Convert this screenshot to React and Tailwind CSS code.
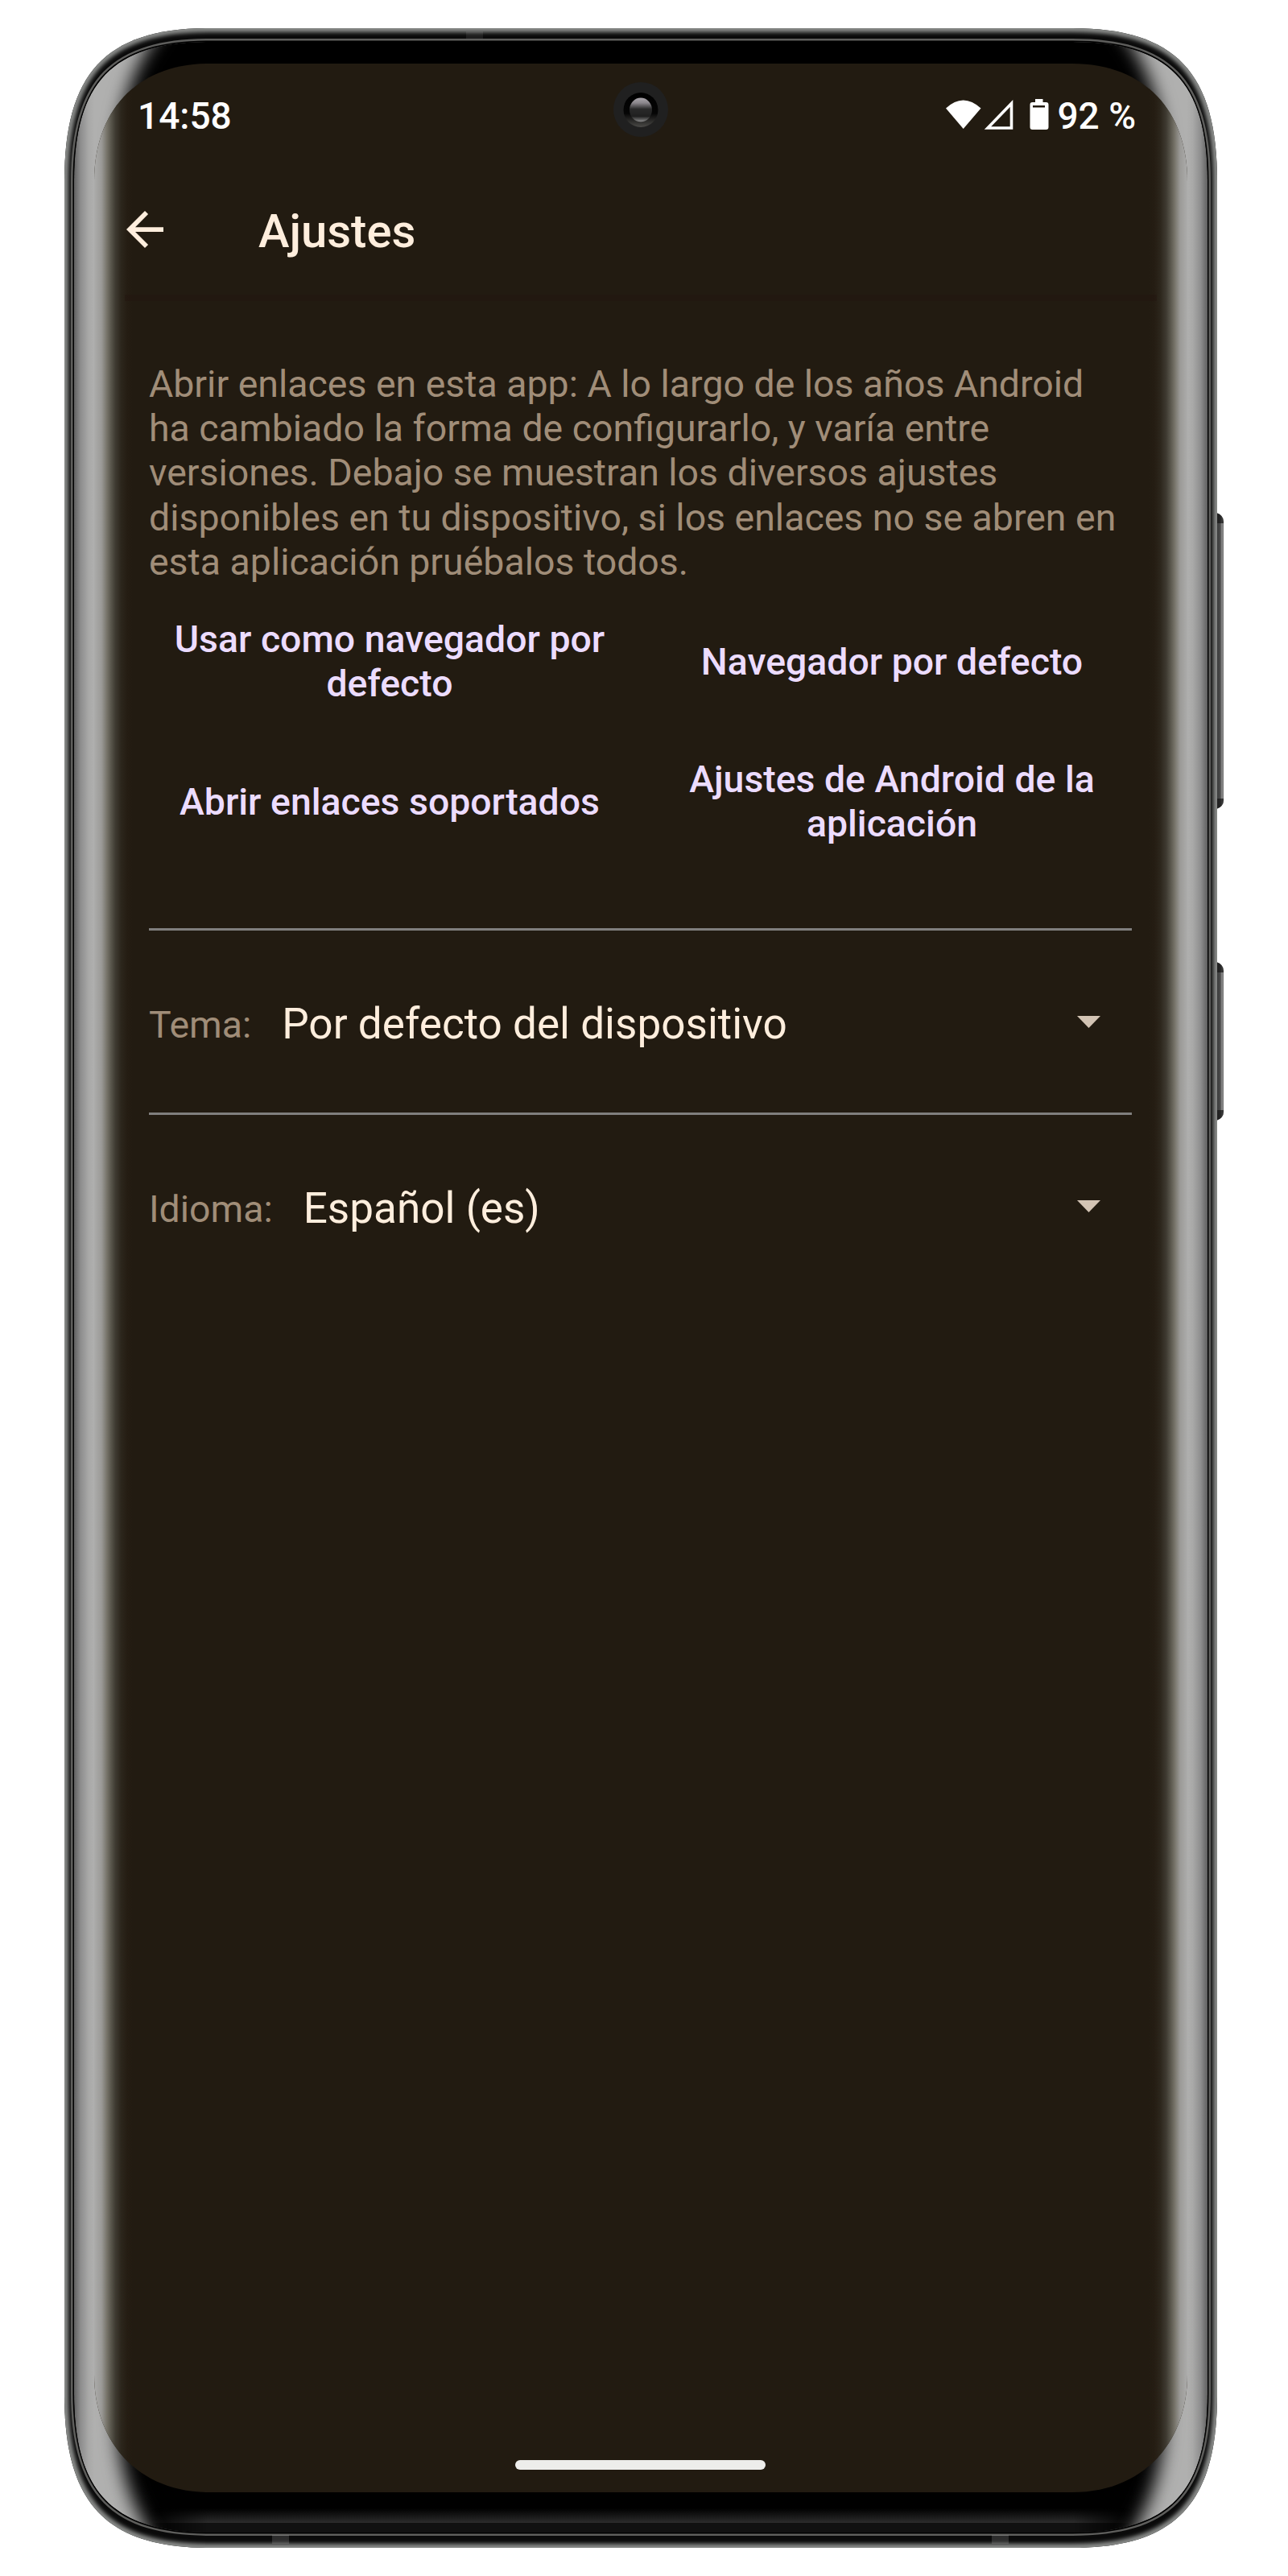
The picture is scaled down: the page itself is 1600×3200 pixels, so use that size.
const BODY = "M260 35H1332C1460 35 1512 90 1512 225V2975C1512 3110 1460 3165 1332 3165H260C132 3165 80 3110 80 2975V225C80 90 132 35 260 35Z";
const GLASS = "M260 52H1332C1450 52 1500 100 1500 225V2973C1500 3098 1450 3146 1332 3146H260C142 3146 92 3098 92 2973V225C92 100 142 52 260 52Z";
const SCREEN = "M260 79H1332C1422 79 1475 138 1475 225V2950C1475 3032 1422 3096 1332 3096H260C170 3096 117 3032 117 2950V225C117 138 170 79 260 79Z";
const SHADE = "M215 20H1377C1418 60 1447 130 1447 200V2990C1447 3070 1428 3120 1385 3180H207C164 3120 145 3070 145 2990V200C145 130 174 60 215 20Z";

function PhoneBody() {
  return (
    <svg className="absolute inset-0" width="1600" height="3200" viewBox="0 0 1600 3200" fill="none" aria-hidden="true">
      <defs>
        <linearGradient id="key" x1="1512" x2="1520" y1="0" y2="0" gradientUnits="userSpaceOnUse">
          <stop offset="0" stopColor="#3a3b3b" />
          <stop offset="0.5" stopColor="#4c4c4c" />
          <stop offset="0.75" stopColor="#909090" />
          <stop offset="1" stopColor="#6a6a6a" />
        </linearGradient>
        <linearGradient id="edge" x1="92" x2="1500" y1="0" y2="0" gradientUnits="userSpaceOnUse">
          <stop offset="0" stopColor="#606060" />
          <stop offset="0.006" stopColor="#8e8e8e" />
          <stop offset="0.013" stopColor="#a9a9a8" />
          <stop offset="0.018" stopColor="#b0b0af" />
          <stop offset="0.982" stopColor="#b0b0af" />
          <stop offset="0.987" stopColor="#a9a9a8" />
          <stop offset="0.994" stopColor="#8e8e8e" />
          <stop offset="1" stopColor="#606060" />
        </linearGradient>
        <linearGradient id="left" x1="117" x2="165" y1="0" y2="0" gradientUnits="userSpaceOnUse">
          <stop offset="0" stopColor="#acacab" />
          <stop offset="0.19" stopColor="#9b9a97" />
          <stop offset="0.33" stopColor="#767369" />
          <stop offset="0.44" stopColor="#58554b" />
          <stop offset="0.55" stopColor="#3e3a31" />
          <stop offset="0.7" stopColor="#2c261c" />
          <stop offset="0.85" stopColor="#251d13" />
          <stop offset="1" stopColor="#221b11" />
        </linearGradient>
        <linearGradient id="right" x1="1475" x2="1427" y1="0" y2="0" gradientUnits="userSpaceOnUse">
          <stop offset="0" stopColor="#acacab" />
          <stop offset="0.19" stopColor="#9b9a97" />
          <stop offset="0.33" stopColor="#767369" />
          <stop offset="0.44" stopColor="#58554b" />
          <stop offset="0.55" stopColor="#3e3a31" />
          <stop offset="0.7" stopColor="#2c261c" />
          <stop offset="0.85" stopColor="#251d13" />
          <stop offset="1" stopColor="#221b11" />
        </linearGradient>
        <linearGradient id="chin" x1="0" x2="0" y1="3116" y2="3134" gradientUnits="userSpaceOnUse">
          <stop offset="0" stopColor="#2c2c2c" stopOpacity="0" />
          <stop offset="1" stopColor="#2c2c2c" />
        </linearGradient>
        <linearGradient id="fade" x1="185" x2="1407" y1="0" y2="0" gradientUnits="userSpaceOnUse">
          <stop offset="0" stopColor="#000000" />
          <stop offset="0.06" stopColor="#ffffff" />
          <stop offset="0.94" stopColor="#ffffff" />
          <stop offset="1" stopColor="#000000" />
        </linearGradient>
        <mask id="chinMask" maskUnits="userSpaceOnUse" x="185" y="3100" width="1222" height="60">
          <rect x="185" y="3100" width="1222" height="60" fill="url(#fade)" />
        </mask>
        <linearGradient id="lens" x1="0" x2="0" y1="122" y2="152" gradientUnits="userSpaceOnUse">
          <stop offset="0" stopColor="#a9a4aa" />
          <stop offset="0.2" stopColor="#8a868b" />
          <stop offset="0.45" stopColor="#292929" />
          <stop offset="0.75" stopColor="#202020" />
          <stop offset="0.95" stopColor="#808080" />
          <stop offset="1" stopColor="#555555" />
        </linearGradient>
        <linearGradient id="barrel" x1="0" x2="0" y1="115" y2="158" gradientUnits="userSpaceOnUse">
          <stop offset="0" stopColor="#000000" />
          <stop offset="0.6" stopColor="#050505" />
          <stop offset="1" stopColor="#4b4a47" />
        </linearGradient>
        <filter id="soft" x="0" y="0" width="1600" height="3200" filterUnits="userSpaceOnUse">
          <feGaussianBlur stdDeviation="11" />
        </filter>
        <filter id="fine" x="0" y="0" width="1600" height="3200" filterUnits="userSpaceOnUse">
          <feGaussianBlur stdDeviation="2.8" />
        </filter>
        <clipPath id="body"><path d={BODY} /></clipPath>
        <clipPath id="glass"><path d={GLASS} /></clipPath>
        <clipPath id="screen"><path d={SCREEN} /></clipPath>
      </defs>

      <path d="M1511 637Q1520 640 1520 648V994Q1520 1002 1511 1005Z" fill="url(#key)" />
      <path d="M1511 1195Q1520 1198 1520 1206V1381Q1520 1389 1511 1392Z" fill="url(#key)" />
      <path d="M1511 637Q1520 640 1520 648V650H1511ZM1511 992H1520V994Q1520 1002 1511 1005ZM1511 1195Q1520 1198 1520 1206V1208H1511ZM1511 1379H1520V1381Q1520 1389 1511 1392Z" fill="#151515" fillOpacity="0.7" />

      <path d={BODY} fill="#0a0a0a" />
      <g clipPath="url(#body)">
        <path d={BODY} stroke="#8a8c8a" strokeWidth="10" filter="url(#fine)" />
      </g>
      <path d={GLASS} stroke="#5e5e5c" strokeWidth="8" />
      <path d={GLASS} stroke="#000000" strokeWidth="3" />
      <g clipPath="url(#glass)">
        <path d={GLASS} fill="url(#edge)" />
        <path d={SHADE} fill="#000000" filter="url(#soft)" />
        <g mask="url(#chinMask)">
          <rect x="185" y="3116" width="1222" height="18" fill="url(#chin)" />
          <rect x="185" y="3134" width="1222" height="12" fill="#111111" />
        </g>
      </g>
      <g clipPath="url(#screen)">
        <rect x="117" y="79" width="1358" height="3017" fill="#221b11" />
        <rect x="117" y="79" width="48" height="3017" fill="url(#left)" />
        <rect x="1427" y="79" width="48" height="3017" fill="url(#right)" />
        <rect x="155" y="366" width="1282" height="8" fill="#22140f" fillOpacity="0.4" />
      </g>
      <rect x="338" y="3149" width="21" height="11" fill="#ffffff" fillOpacity="0.14" />
      <rect x="1232" y="3149" width="21" height="11" fill="#ffffff" fillOpacity="0.14" />
      <rect x="579" y="39" width="21" height="9" fill="#ffffff" fillOpacity="0.08" />

      <circle cx="796" cy="136" r="34" fill="#202020" />
      <circle cx="796" cy="136.500" r="21.500" fill="url(#barrel)" />
      <ellipse cx="796" cy="136.500" rx="14" ry="15" fill="url(#lens)" />
    </svg>
  );
}

function StatusBar() {
  return (
    <div className="flex h-[128px] items-start justify-between pr-[189px] pl-[171px] text-[46px] leading-[54px] font-medium text-white">
      <span className="pt-[38px]">14:58</span>
      <div className="flex pt-[38px]">
        <svg className="mt-[5px]" width="138" height="42" viewBox="0 0 138 42" aria-hidden="true">
          <path d="M0 11.500Q21.500-8.500 43.500 11.500L21.700 37Z" fill="#ffffff" transform="translate(0 1)" />
          <path d="M52 37L81.500 6.500V37Z" fill="none" stroke="#ffffff" strokeWidth="3.600" />
          <path d="M111 1h9.500v4h4q3 0 3 3v28q0 3-3 3h-17q-3 0-3-3V8q0-3 3-3h3.500z" fill="#ffffff" />
          <rect x="108" y="9" width="15" height="2.500" fill="#221b11" />
        </svg>
        <span className="whitespace-nowrap">92 %</span>
      </div>
    </div>
  );
}

function AppBar() {
  return (
    <header className="flex h-[159px] items-center pb-[4px] pl-[157px]">
      <svg width="46" height="46" viewBox="4 4 16 16" fill="#ffeedd" aria-hidden="true">
        <path d="M20 11H7.830l5.590-5.590L12 4l-8 8 8 8 1.410-1.410L7.830 13H20z" />
      </svg>
      <h1 className="ml-[118px] pt-[4px] text-[58px] leading-[68px] font-medium text-[#ffeedd]">Ajustes</h1>
    </header>
  );
}

function LinkButton({ children }) {
  return (
    <button className="flex h-[174px] w-[596px] items-center justify-center text-center text-[46.400px] leading-[55px] font-medium text-[#ecdcff]">
      <span>{children}</span>
    </button>
  );
}

function Picker({ label, value }) {
  return (
    <div className="flex h-[226px] items-center">
      <span className="pt-[8px] text-[46.400px] leading-[55px] text-[#a08d78]">{label}</span>
      <span className="ml-[38px] pt-[6px] text-[53.100px] leading-[64px] text-[#ffeedd]">{value}</span>
      <svg className="mr-[39px] ml-auto" width="29" height="15" viewBox="0 0 29 15" aria-hidden="true">
        <path d="M0 0h29L14.500 15z" fill="#d3c4b4" />
      </svg>
    </div>
  );
}

export default function App() {
  return (
    <div className="relative h-[3200px] w-[1600px] overflow-hidden bg-white font-['Roboto',sans-serif]">
      <PhoneBody />
      <div className="relative flex h-full flex-col pt-[79px]">
        <StatusBar />
        <AppBar />
        <main className="ml-[185px] w-[1221px] pt-[84px]">
          <p className="text-[46.450px] leading-[55.200px] whitespace-nowrap text-[#a08d78]">
            Abrir enlaces en esta app: A lo largo de los años Android<br />
            ha cambiado la forma de configurarlo, y varía entre<br />
            versiones. Debajo se muestran los diversos ajustes<br />
            disponibles en tu dispositivo, si los enlaces no se abren en<br />
            esta aplicación pruébalos todos.
          </p>
          <div className="mt-[9px] ml-px grid grid-cols-[596px_596px] gap-x-[28px]">
            <LinkButton>Usar como navegador por<br />defecto</LinkButton>
            <LinkButton>Navegador por defecto</LinkButton>
            <LinkButton>Abrir enlaces soportados</LinkButton>
            <LinkButton>Ajustes de Android de la<br />aplicación</LinkButton>
          </div>
          <div className="mt-[70px] h-[3px] bg-[#807f7e]" />
          <Picker label="Tema:" value="Por defecto del dispositivo" />
          <div className="h-[3px] bg-[#807f7e]" />
          <Picker label="Idioma:" value="Español (es)" />
        </main>
        <div className="mt-auto mb-[132px] ml-[640px] h-[12px] w-[311px] rounded-full bg-[#ededeb]" />
      </div>
    </div>
  );
}
